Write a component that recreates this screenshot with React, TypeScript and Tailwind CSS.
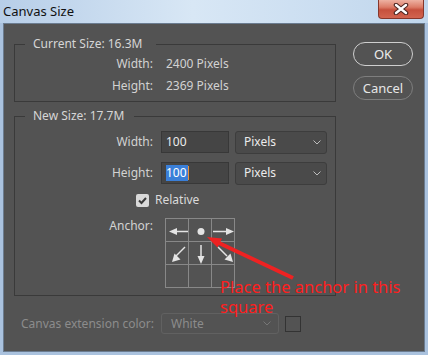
import React from "react";

/* ---------------- Icons ---------------- */

function CloseX() {
  return (
    <svg width="16" height="12" viewBox="0 0 16 12">
      <path d="M3 2l10 8M13 2L3 10" stroke="#4a2420" strokeWidth="4.5" strokeLinecap="round" />
      <path d="M3 2l10 8M13 2L3 10" stroke="#ffffff" strokeWidth="2.4" strokeLinecap="round" />
    </svg>
  );
}

function Chevron({ color = "#bdbdbd" }: { color?: string }) {
  return (
    <svg width="8" height="5" viewBox="0 0 8 5">
      <path d="M0.5 0.5L4 4l3.5-3.5" fill="none" stroke={color} strokeWidth="1" />
    </svg>
  );
}

function CheckMark() {
  return (
    <svg width="13" height="13" viewBox="0 0 13 13">
      <path d="M3 6.5l2.5 2.5L10 4" fill="none" stroke="#3a3a3a" strokeWidth="2" />
    </svg>
  );
}

type Dir = "l" | "dot" | "r" | "dl" | "d" | "dr" | "none";

function AnchorGlyph({ dir }: { dir: Dir }) {
  const c = "#e4e4e4";
  return (
    <svg width="22" height="22" viewBox="0 0 22 22">
      {dir === "l" && (
        <>
          <path d="M10 12.5H22" stroke={c} strokeWidth="1.5" />
          <path d="M3 12.5L11 9v7z" fill={c} />
        </>
      )}
      {dir === "dot" && <circle cx="12" cy="12.5" r="3.5" fill={c} />}
      {dir === "r" && (
        <>
          <path d="M1 12.5H14" stroke={c} strokeWidth="1.5" />
          <path d="M22 12.5L14 9v7z" fill={c} />
        </>
      )}
      {dir === "dl" && (
        <>
          <path d="M19 5L10 14" stroke={c} strokeWidth="1.5" />
          <path d="M6 20l2.5-8.5 6 6z" fill={c} />
        </>
      )}
      {dir === "d" && (
        <>
          <path d="M12 3V15" stroke={c} strokeWidth="1.5" />
          <path d="M12 22l-3.5-8h7z" fill={c} />
        </>
      )}
      {dir === "dr" && (
        <>
          <path d="M6 5l9 9" stroke={c} strokeWidth="1.5" />
          <path d="M21 20l-8.5-2.5 6-6z" fill={c} />
        </>
      )}
    </svg>
  );
}

const ANCHOR: Dir[] = ["l", "dot", "r", "dl", "d", "dr", "none", "none", "none"];

/* ---------------- Component ---------------- */

export default function App() {
  const label = "w-[138px] shrink-0 text-right text-[#d2d2d2]";
  const inputClass =
    "h-[22px] w-[68px] ml-[8px] bg-[#454545] border border-[#383838] pl-[4px] flex items-center text-[#ececec]";
  const selectClass =
    "h-[23px] w-[92px] ml-[6px] rounded-[3px] bg-[#4a4a4a] border border-[#3d3d3d] pl-[8px] pr-[5px] flex items-center justify-between text-[#ececec]";

  return (
    <div className="relative w-[428px] h-[355px] flex flex-col bg-[#aac2de] font-['Noto_Sans',sans-serif] text-[12px] leading-[16px] overflow-hidden">
      {/* Title bar */}
      <div className="h-[23px] shrink-0 flex items-start justify-between bg-[linear-gradient(90deg,#b7cee8_0%,#d8e7f5_45%,#cbdef1_75%,#c0d6ec_100%)]">
        <div className="pl-[3px] pt-[3px] text-[13px] leading-[17px] text-[#111]">Canvas Size</div>
        <div className="mr-[4px] w-[46px] h-[19px] rounded-b-[4px] border border-t-0 border-[#86372c] bg-[linear-gradient(180deg,#eeb1a2_0%,#dc7b67_40%,#c6503d_55%,#d26450_100%)] flex items-center justify-center">
          <CloseX />
        </div>
      </div>

      {/* Body */}
      <div className="flex-1 mx-[3px] mb-[3px] bg-[#535353] border border-[#6b7c90] flex pt-[12px] pl-[10px]">
        <div className="w-[322px] flex flex-col">
          {/* Current size */}
          <fieldset className="border border-[#3a3a3a] pb-[4px]">
            <legend className="ml-[10px] pl-[8px] pr-[14px] text-[#d6d6d6]">Current Size: 16.3M</legend>
            <div className="mt-[1px] h-[22px] flex items-center">
              <span className={label}>Width:</span>
              <span className="ml-[13px] text-[#d2d2d2]">2400 Pixels</span>
            </div>
            <div className="h-[22px] flex items-center">
              <span className={label}>Height:</span>
              <span className="ml-[13px] text-[#d2d2d2]">2369 Pixels</span>
            </div>
          </fieldset>

          {/* New size */}
          <fieldset className="mt-[6px] border border-[#3a3a3a] pb-[7px]">
            <legend className="ml-[10px] pl-[8px] pr-[10px] text-[#d6d6d6]">New Size: 17.7M</legend>
            <div className="mt-[7px] h-[22px] flex items-center">
              <span className={label}>Width:</span>
              <div className={inputClass}>100</div>
              <div className={selectClass}>
                <span>Pixels</span>
                <Chevron />
              </div>
            </div>
            <div className="mt-[9px] h-[22px] flex items-center">
              <span className={label}>Height:</span>
              <div className={inputClass + " border-[#2f7ce0]"}>
                <span className="bg-[#3a7fd8] text-white pr-[1px]">100</span>
                <span className="w-[1px] h-[14px] bg-[#e8903a]" />
              </div>
              <div className={selectClass}>
                <span>Pixels</span>
                <Chevron />
              </div>
            </div>
            <div className="mt-[8px] h-[16px] flex items-center pl-[121px]">
              <span className="w-[13px] h-[13px] rounded-[2px] bg-[#d9d9d9] flex items-center justify-center">
                <CheckMark />
              </span>
              <span className="ml-[6px] text-[#dadada]">Relative</span>
            </div>
            <div className="mt-[10px] flex items-start">
              <span className={label}>Anchor:</span>
              <div className="ml-[12px] grid grid-cols-[repeat(3,22px)] gap-[1px] bg-[#888888] border border-[#888888]">
                {ANCHOR.map((d, i) => (
                  <div key={i} className="w-[22px] h-[22px] bg-[#535353]">
                    <AnchorGlyph dir={d} />
                  </div>
                ))}
              </div>
            </div>
          </fieldset>

          {/* Canvas extension color (disabled) */}
          <div className="mt-[17px] flex items-center">
            <span className="w-[140px] shrink-0 text-right text-[#8c8c8c]">Canvas extension color:</span>
            <div className="ml-[7px] w-[118px] h-[21px] rounded-[3px] border border-[#616161] pl-[9px] pr-[7px] flex items-center justify-between text-[#8c8c8c]">
              <span>White</span>
              <Chevron color="#767676" />
            </div>
            <div className="ml-[6px] w-[16px] h-[16px] border border-[#333333]" />
          </div>
        </div>

        {/* Buttons */}
        <div className="ml-[17px] pt-[6px] flex flex-col gap-[10px]">
          <button className="w-[60px] h-[24px] rounded-full border-[1.5px] border-[#cfcfcf] text-[#ececec] text-[13px] leading-[16px]">OK</button>
          <button className="w-[60px] h-[24px] rounded-full border border-[#7e7e7e] text-[#e6e6e6] text-[13px] leading-[16px]">Cancel</button>
        </div>
      </div>

      {/* Annotation */}
      <svg className="absolute left-0 top-0 pointer-events-none" width="428" height="355">
        <path d="M293 278L219 243" stroke="#ee2222" strokeWidth="4" />
        <path d="M207 237L222 238.5L217.5 247.5z" fill="#ee2222" />
      </svg>
      <div className="absolute left-[220px] top-[277px] whitespace-nowrap text-[16.5px] leading-[20px] text-[#ff1e1e] pointer-events-none">
        Place the anchor in this
        <br />
        square
      </div>
    </div>
  );
}
